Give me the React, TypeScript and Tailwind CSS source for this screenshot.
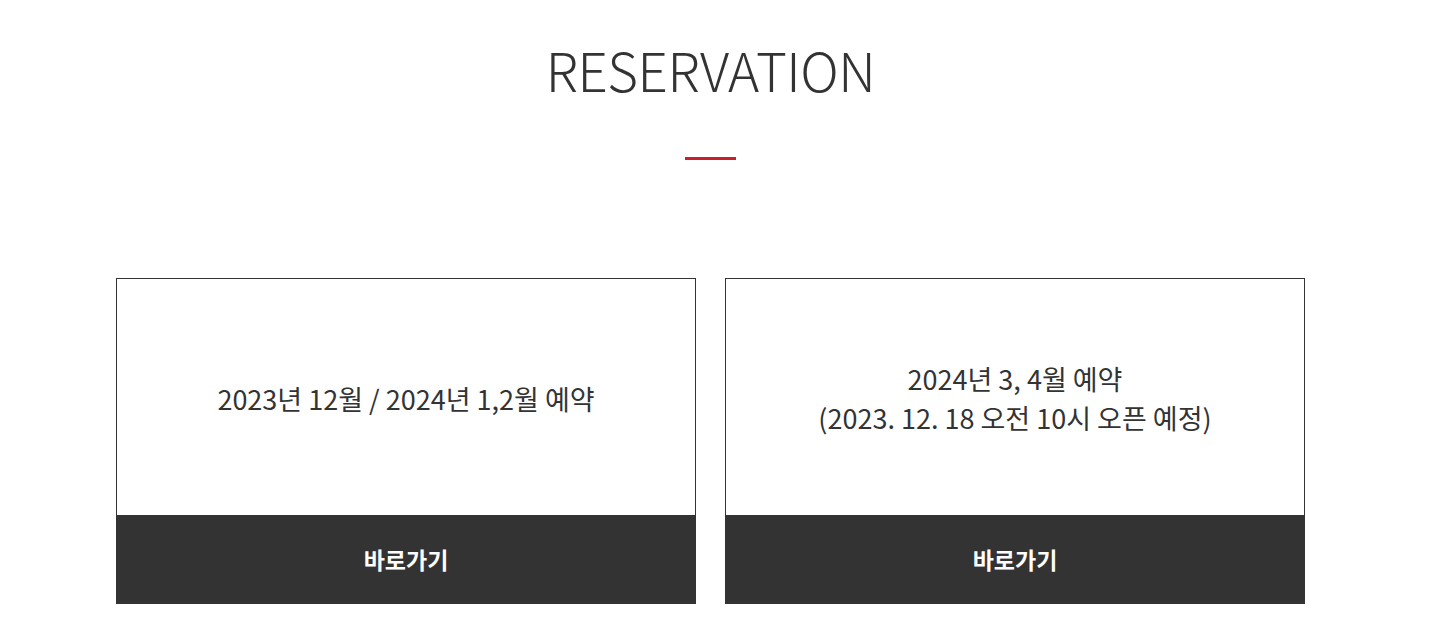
import React from 'react';

const cards = [
    { lines: ['2023년 12월 / 2024년 1,2월 예약'] },
    { lines: ['2024년 3, 4월 예약', '(2023. 12. 18 오전 10시 오픈 예정)'] },
];

export default function App() {
    return (
        <div className="min-h-[636px] bg-white pr-[9px] font-['Noto_Sans_CJK_KR','Noto_Sans',sans-serif] text-[#333]">
            <div className="pt-[34px] text-center">
                <h2 className="text-[53px] font-light leading-[70px] tracking-[-0.5px] text-[#333]">RESERVATION</h2>
                <div className="mx-auto mt-[53px] h-[3px] w-[51px] bg-[#c8202a]" />
            </div>
            <div className="mt-[118px] flex justify-center gap-[29px]">
                {cards.map((card, i) => (
                    <div key={i} className="flex w-[580px] flex-col">
                        <div className="flex h-[237px] flex-col items-center justify-center border border-b-0 border-[#333] pt-[2px] text-[27px] leading-[39px]">
                            {card.lines.map((line, j) => (
                                <p key={j}>{line}</p>
                            ))}
                        </div>
                        <a href="#" className="flex h-[89px] items-center justify-center bg-[#333] text-[23px] font-bold text-white">
                            바로가기
                        </a>
                    </div>
                ))}
            </div>
        </div>
    );
}
